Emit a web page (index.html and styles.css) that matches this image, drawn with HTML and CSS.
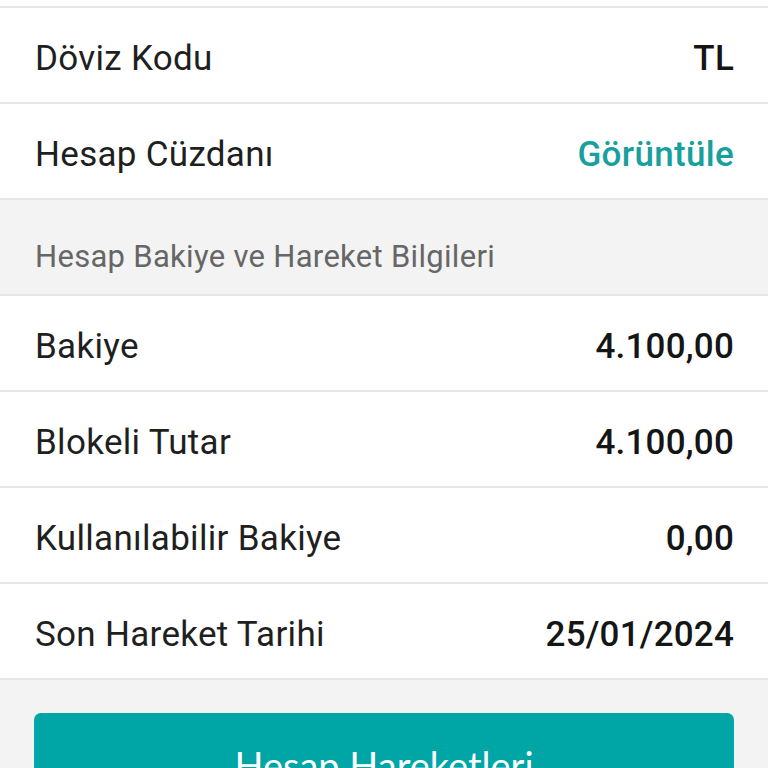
FILE: index.html
```html
<!DOCTYPE html>
<html lang="tr">
<head>
    <meta charset="UTF-8">
    <meta name="viewport" content="width=device-width, initial-scale=1.0">
    <title>Hesap Detayı</title>
    <link rel="stylesheet" href="styles.css">
</head>
<body>

    <div class="top-gap"></div>

    <section class="info-list">
        <div class="info-row">
            <span class="info-row__label">Döviz Kodu</span>
            <span class="info-row__value">TL</span>
        </div>
        <div class="info-row">
            <span class="info-row__label">Hesap Cüzdanı</span>
            <a class="info-row__link" href="#">Görüntüle</a>
        </div>
    </section>

    <div class="section-title">Hesap Bakiye ve Hareket Bilgileri</div>

    <section class="info-list">
        <div class="info-row">
            <span class="info-row__label">Bakiye</span>
            <span class="info-row__value">4.100,00</span>
        </div>
        <div class="info-row">
            <span class="info-row__label">Blokeli Tutar</span>
            <span class="info-row__value">4.100,00</span>
        </div>
        <div class="info-row">
            <span class="info-row__label">Kullanılabilir Bakiye</span>
            <span class="info-row__value">0,00</span>
        </div>
        <div class="info-row">
            <span class="info-row__label">Son Hareket Tarihi</span>
            <span class="info-row__value">25/01/2024</span>
        </div>
    </section>

    <div class="actions">
        <button class="actions__btn">Hesap Hareketleri</button>
    </div>

</body>
</html>
```

FILE: styles.css
```css
body {
    font-family: Roboto, "Noto Sans", sans-serif;
    background: #f3f3f3;
    color: #1c1c1c;
    margin: 0;
}

.top-gap {
    height: 6px;
    background: #fff;
}

.info-list {
    background: #fff;
    border-top: 2px solid #e6e6e6;
}

.info-row {
    display: flex;
    justify-content: space-between;
    align-items: center;
    box-sizing: border-box;
    height: 96px;
    padding: 6px 34px 0 35px;
    border-bottom: 2px solid #e6e6e6;
    font-size: 35px;
    letter-spacing: 0.3px;
}

.info-list .info-row:last-child {
    height: 94px;
    border-bottom: none;
}

.info-row__label {
    color: #1f1f1f;
}

.info-row__value {
    font-weight: 500;
    color: #151515;
    letter-spacing: 0.2px;
}

.info-row__link {
    font-weight: 500;
    color: #17a09e;
    text-decoration: none;
}

.section-title {
    display: flex;
    align-items: flex-end;
    height: 96px;
    box-sizing: border-box;
    padding: 0 35px 19px;
    border-top: 2px solid #e6e6e6;
    font-size: 31px;
    letter-spacing: 0.3px;
    color: #666;
}

.actions {
    border-top: 2px solid #e6e6e6;
    padding: 33px 34px;
}

.actions__btn {
    display: block;
    width: 100%;
    height: 104px;
    border: none;
    border-radius: 7px;
    background: #00a5a5;
    color: #fff;
    font-family: Lato, "Noto Sans", sans-serif;
    font-size: 38px;
    padding: 0;
    cursor: pointer;
}
```
